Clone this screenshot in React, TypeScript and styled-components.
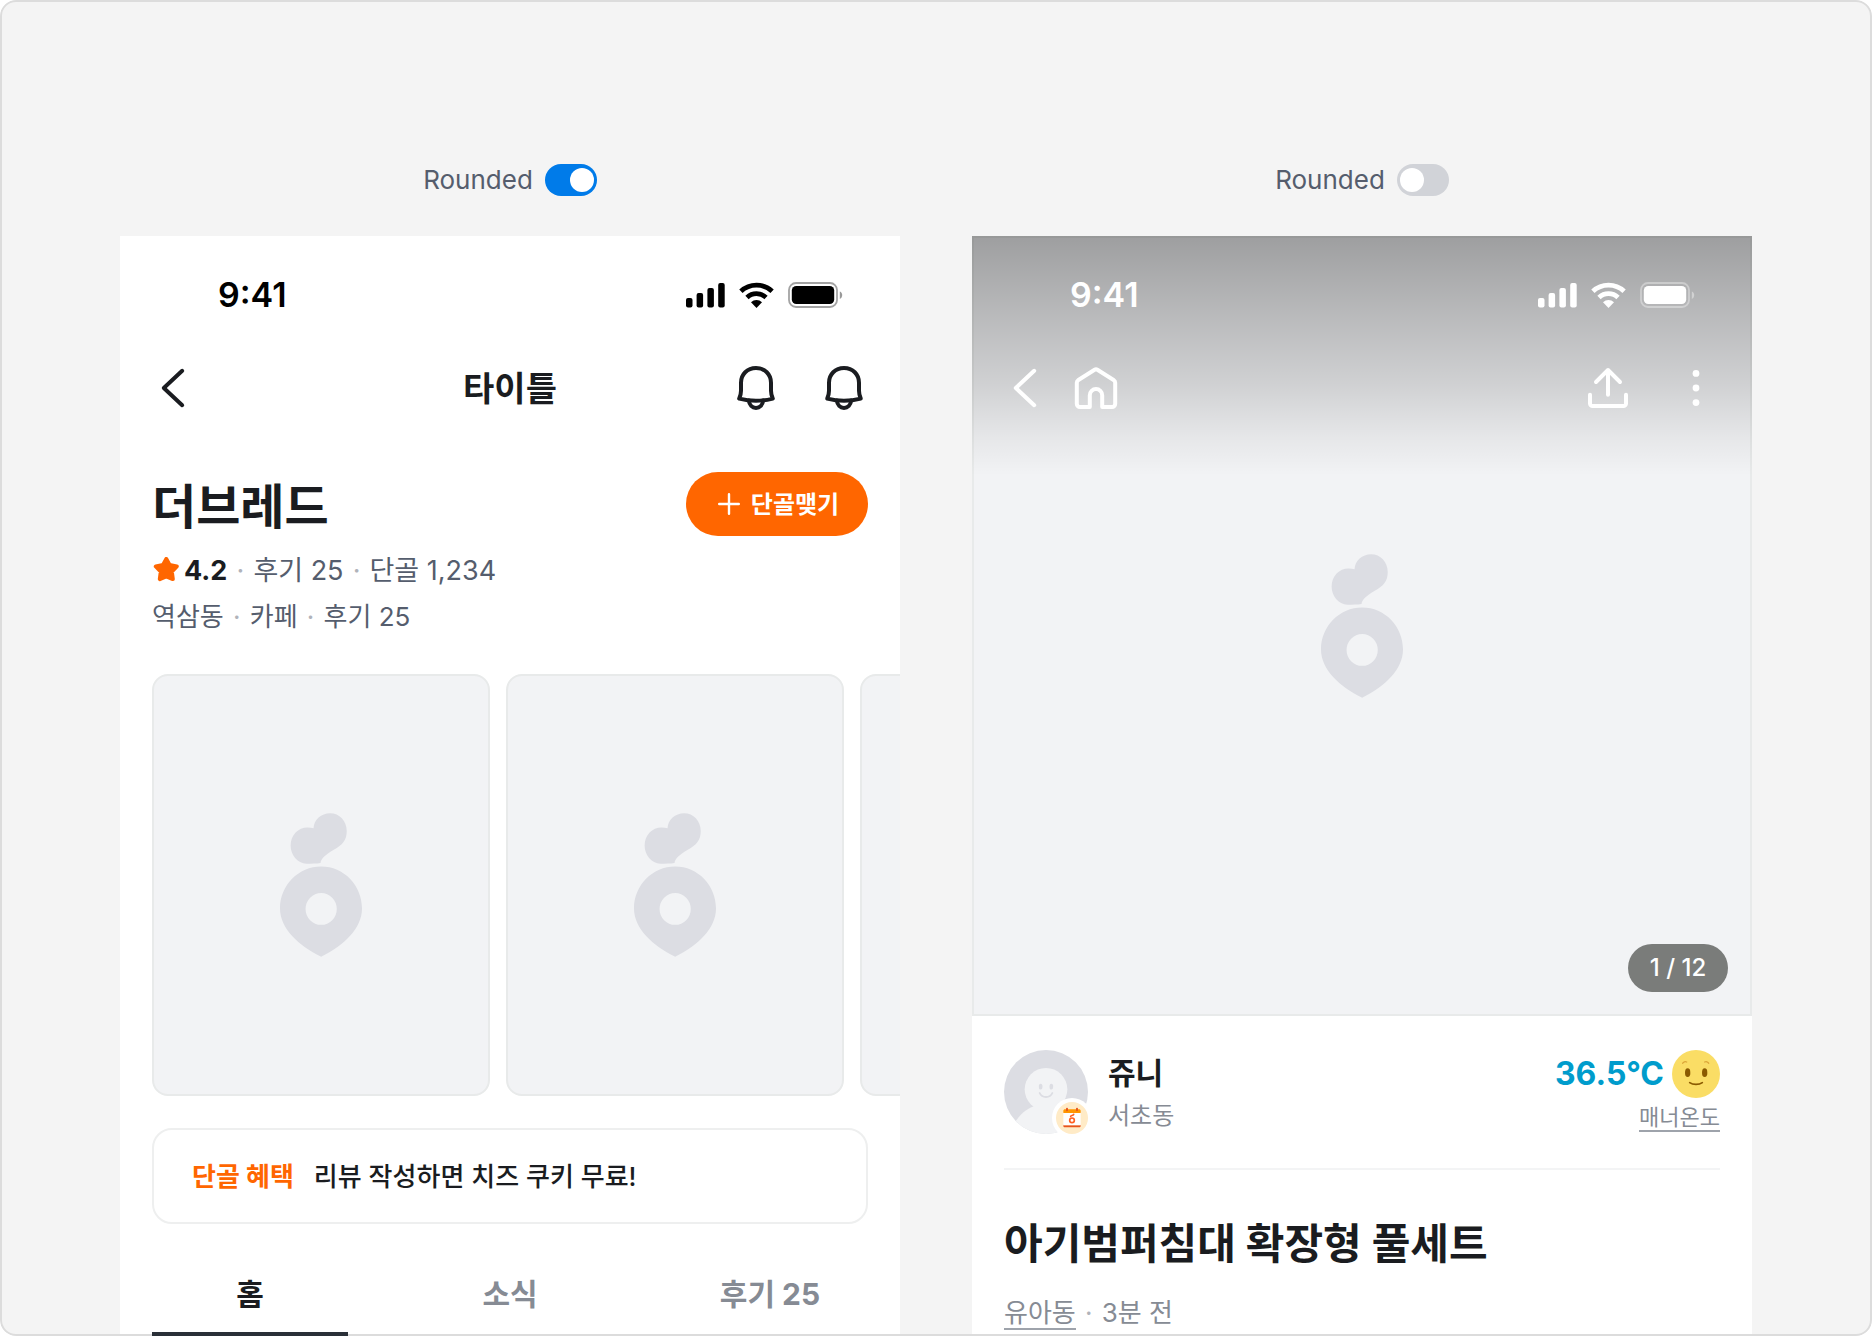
import React, { useState } from "react";
import styled, { createGlobalStyle } from "styled-components";

const sans = `Inter, "Noto Sans CJK KR", sans-serif`;

const GlobalStyle = createGlobalStyle`
  *, *::before, *::after { box-sizing: border-box; }
  body { margin: 0; background: #ffffff; font-family: ${sans}; color: #1a1c20; }
  button { font: inherit; color: inherit; background: none; border: 0; padding: 0; cursor: pointer; }
  h1, h2, p { margin: 0; }
  svg { display: block; flex: none; }
`;

const Frame = styled.main`
  position: relative;
  display: flex;
  gap: 72px;
  height: 100vh;
  padding: 164px 120px 0;
  overflow: hidden;
  border-radius: 16px;
  background: #f4f4f4;

  &::after {
    content: "";
    position: absolute;
    inset: 0;
    z-index: 1;
    border: 2px solid #dcdcdc;
    border-radius: 16px;
    pointer-events: none;
  }
`;

const Column = styled.section`
  flex: 1;
  min-width: 0;
  display: flex;
  flex-direction: column;
  gap: 40px;
`;

const SwitchLabel = styled.label`
  display: flex;
  align-items: center;
  justify-content: center;
  gap: 12px;
  height: 32px;
  font-size: 26px;
  line-height: 32px;
  color: #555d6d;
`;

const Switch = styled.input`
  appearance: none;
  display: flex;
  align-items: center;
  width: 52px;
  height: 32px;
  margin: 0;
  padding: 0 3px;
  border-radius: 16px;
  background: #d1d3d8;
  cursor: pointer;

  &::before {
    content: "";
    width: 24px;
    height: 24px;
    border-radius: 50%;
    background: #ffffff;
  }

  &:checked {
    justify-content: flex-end;
    background: #007be9;
  }
`;

const Phone = styled.div`
  flex: 1 0 auto;
  background: #ffffff;
`;

const StatusBar = styled.div<{ $light?: boolean }>`
  display: flex;
  align-items: center;
  justify-content: space-between;
  height: 108px;
  padding: 10px 57px 0 98px;
  color: ${(p) => (p.$light ? "#ffffff" : "#000000")};
`;

const Time = styled.span`
  font-size: 34px;
  line-height: 40px;
  font-weight: 600;
`;

const StatusIcons = styled.div`
  display: flex;
  align-items: center;
  gap: 14px;
`;

const NavBar = styled.nav<{ $light?: boolean }>`
  display: grid;
  grid-template-columns: 1fr auto 1fr;
  align-items: center;
  height: 88px;
  padding: 0 32px;
  color: ${(p) => (p.$light ? "#ffffff" : "#1a1c20")};
`;

const NavGroup = styled.div<{ $end?: boolean }>`
  display: flex;
  gap: ${(p) => (p.$end ? 40 : 20)}px;
  justify-content: ${(p) => (p.$end ? "flex-end" : "flex-start")};
`;

const IconButton = styled.button`
  width: 48px;
  height: 48px;
`;

const NavTitle = styled.h2`
  padding-top: 2px;
  font-size: 34px;
  line-height: 48px;
  font-weight: 700;
`;

const Shop = styled.div`
  padding: 40px 32px 34px;
`;

const ShopHeader = styled.div`
  display: flex;
  align-items: center;
  justify-content: space-between;
  margin-bottom: 12px;
`;

const ShopName = styled.h1`
  padding-top: 6px;
  font-size: 48px;
  line-height: 58px;
  font-weight: 700;
`;

const FollowButton = styled.button`
  display: flex;
  align-items: center;
  justify-content: center;
  gap: 8px;
  min-width: 182px;
  height: 64px;
  border-radius: 32px;
  background: #ff6600;
  color: #ffffff;
  font-size: 24px;
  line-height: 32px;
  font-weight: 700;
`;

const FollowText = styled.span`
  padding-top: 2px;
`;

const InfoLine = styled.p<{ $small?: boolean }>`
  display: flex;
  align-items: center;
  font-size: ${(p) => (p.$small ? 26 : 27)}px;
  line-height: 46px;
  color: #555d6d;
`;

const Score = styled.strong`
  margin-left: 4px;
  font-weight: 700;
  color: #1a1c20;
`;

const Dot = styled.span`
  width: 26px;
  text-align: center;
  color: #b0b3ba;
`;

const Carousel = styled.div`
  display: flex;
  gap: 16px;
  padding-left: 32px;
  overflow: hidden;
`;

const PhotoCard = styled.div`
  flex: none;
  display: flex;
  align-items: center;
  justify-content: center;
  width: 338px;
  height: 422px;
  border: 2px solid #e8eaea;
  border-radius: 16px;
  background: #f2f3f5;
`;

const Benefit = styled.div`
  display: flex;
  align-items: center;
  gap: 20px;
  height: 96px;
  margin: 32px 32px 28px;
  padding: 2px 38px 0;
  border: 2px solid #eeefef;
  border-radius: 20px;
  font-size: 26px;
  line-height: 36px;
  font-weight: 500;
`;

const BenefitTag = styled.strong`
  font-weight: 700;
  color: #ff6600;
`;

const Tabs = styled.div`
  display: flex;
`;

const Tab = styled.button<{ $active: boolean }>`
  position: relative;
  flex: 1;
  height: 84px;
  font-size: 30px;
  line-height: 40px;
  font-weight: 700;
  color: ${(p) => (p.$active ? "#1a1c20" : "#868b94")};

  &::after {
    content: "";
    position: absolute;
    inset: auto 32px 0;
    z-index: 2;
    height: 4px;
    background: ${(p) => (p.$active ? "#2a3038" : "transparent")};
  }
`;

const Hero = styled.div`
  position: relative;
  display: flex;
  align-items: center;
  justify-content: center;
  aspect-ratio: 1;
  border: 2px solid #e8eaea;
  background: #f2f3f5;
`;

const HeroOverlay = styled.div`
  position: absolute;
  inset: -2px -2px auto;
  height: 240px;
  background: linear-gradient(rgba(0, 0, 0, 0.35), rgba(0, 0, 0, 0.24) 32%, rgba(0, 0, 0, 0.14) 62%, rgba(0, 0, 0, 0.05) 84%, rgba(0, 0, 0, 0));
`;

const PageBadge = styled.span`
  position: absolute;
  right: 22px;
  bottom: 22px;
  min-width: 100px;
  height: 48px;
  border-radius: 24px;
  background: #7a7c7a;
  color: #ffffff;
  font-size: 24px;
  line-height: 48px;
  font-weight: 500;
  text-align: center;
`;

const Details = styled.div`
  padding: 0 32px;
`;

const Seller = styled.div`
  display: flex;
  align-items: flex-start;
  justify-content: space-between;
  padding: 34px 0;
  border-bottom: 2px solid #f3f4f5;
`;

const SellerProfile = styled.div`
  display: flex;
  gap: 20px;
`;

const SellerText = styled.div`
  padding-top: 2px;
`;

const SellerName = styled.p`
  font-size: 30px;
  line-height: 42px;
  font-weight: 700;
`;

const SellerArea = styled.p`
  padding-top: 4px;
  font-size: 24px;
  line-height: 36px;
  color: #868b94;
`;

const Manner = styled.div`
  display: flex;
  flex-direction: column;
  align-items: flex-end;
  gap: 6px;
`;

const Temperature = styled.div`
  display: flex;
  align-items: center;
  gap: 8px;
  height: 48px;
  font-size: 32px;
  line-height: 48px;
  font-weight: 700;
  color: #009ccc;
`;

const TextLink = styled.a<{ $small?: boolean }>`
  border-bottom: 2px solid #9ea3ab;
  font-size: ${(p) => (p.$small ? 22 : 26)}px;
  line-height: ${(p) => (p.$small ? 26 : 30)}px;
  color: #868b94;
  text-decoration: none;
`;

const PostTitle = styled.h1`
  margin-top: 46px;
  font-size: 42px;
  line-height: 56px;
  font-weight: 700;
`;

const PostMeta = styled.p`
  display: flex;
  margin-top: 26px;
  font-size: 26px;
  line-height: 30px;
  color: #868b94;
`;

const Carrot = () => (
  <svg width="82" height="144" viewBox="60 68 247 432" fill="#dcdde3" aria-hidden="true">
    <path d="M161 113C162 88 184 68 211 68c28 0 50 23 50 53 0 29-13 41-39 57-25 15-38 26-40 40-12 2-27 2-42 2-28-2-48-26-48-55 0-31 23-54 51-54 7 0 13 1 18 2Z" />
    <path fillRule="evenodd" d="M184 228c68 0 123 56 123 127 0 60-54 111-123 145C115 466 60 415 60 355c0-71 56-127 124-127Zm0 80a47 48 0 1 0 0 96 47 48 0 0 0 0-96Z" />
  </svg>
);

const icon = { width: 48, height: 48, viewBox: "0 0 24 24", fill: "none", "aria-hidden": true } as const;
const line = { stroke: "currentColor", strokeWidth: 2, strokeLinecap: "round", strokeLinejoin: "round" } as const;

const BackIcon = () => (
  <svg {...icon}>
    <path {...line} d="M15.1 3.4 5.9 12l9.2 8.6" />
  </svg>
);

const BellIcon = () => (
  <svg {...icon}>
    <path {...line} d="M12 2c-4.4 0-7.5 3.2-7.5 7.4v4c0 1.3-.3 2.6-.9 3.9 2.7.7 5.5 1.1 8.4 1.1s5.7-.4 8.400-1.100c-.6-1.300-.9-2.600-.9-3.900v-4C19.500 5.200 16.400 2 12 2Z" />
    <path {...line} d="M8.400 18.300C8.700 20.500 10.100 22 12 22s3.300-1.500 3.600-3.700" />
  </svg>
);

const HomeIcon = () => (
  <svg {...icon}>
    <path {...line} d="M11.300 2.900 3.200 8a1.700 1.700 0 0 0-.8 1.400v10.500c0 .9.700 1.600 1.600 1.600h4.900v-5.900a3.100 3.100 0 0 1 6.200 0v5.900H20c.9 0 1.600-.7 1.600-1.600V9.400c0-.6-.3-1.100-.8-1.400l-8.100-5.100a1.300 1.300 0 0 0-1.400 0Z" />
  </svg>
);

const ShareIcon = () => (
  <svg {...icon}>
    <path {...line} d="M12 15.400V3M6 9l6-6 6 6M3 15.400v4.300c0 .7.6 1.300 1.300 1.300h15.400c.7 0 1.300-.6 1.300-1.300v-4.300" />
  </svg>
);

const MoreIcon = () => (
  <svg {...icon} fill="currentColor">
    <circle cx="12" cy="4.7" r="1.7" />
    <circle cx="12" cy="12" r="1.7" />
    <circle cx="12" cy="19.3" r="1.7" />
  </svg>
);

const PlusIcon = () => (
  <svg width="28" height="28" viewBox="0 0 28 28" fill="none" stroke="currentColor" strokeWidth="2.4" strokeLinecap="round" aria-hidden="true">
    <path d="M14 4.200v19.600M4.200 14h19.600" />
  </svg>
);

const StarIcon = () => (
  <svg width="28" height="28" viewBox="0 0 28 28" fill="#ff6600" stroke="#ff6600" strokeWidth="4" strokeLinejoin="round" aria-hidden="true">
    <path d="m14.300 2 3.300 5.900 7.200 1.500-5 5.200 1 7.500-6.500-2.600-6.500 2.600 1-7.500-5-5.200L11 7.900Z" />
  </svg>
);

const StatusGlyphs = () => (
  <StatusIcons aria-hidden="true">
    <svg width="39" height="26" viewBox="0 0 39 26" fill="currentColor">
      <rect x="0" y="16" width="6.5" height="9.5" rx="2" />
      <rect x="10.6" y="11" width="6.5" height="14.5" rx="2" />
      <rect x="21.4" y="6" width="6.5" height="19.5" rx="2" />
      <rect x="32.2" y="1" width="6.5" height="24.5" rx="2" />
    </svg>
    <svg width="35" height="26" viewBox="0 0 35 26" fill="none" stroke="currentColor" strokeWidth="4.8">
      <path d="M1.900 9.300a22.800 22.800 0 0 1 31.200 0" />
      <path d="M8 15.400a13.800 13.800 0 0 1 19 0" />
      <path d="M17.500 26 12 20.300a8 8 0 0 1 11 0Z" fill="currentColor" stroke="none" />
    </svg>
    <svg width="55" height="26" viewBox="0 0 55 26" fill="none">
      <rect x="1" y="1" width="48" height="24" rx="7" stroke="currentColor" strokeWidth="1.8" opacity=".36" />
      <rect x="3.8" y="4" width="42.4" height="18" rx="4.5" fill="currentColor" />
      <path d="M51.800 9.500c3.200 1.200 3.200 6.200 0 7.400Z" fill="currentColor" opacity=".4" />
    </svg>
  </StatusIcons>
);

const Avatar = () => (
  <svg width="84" height="84" viewBox="72 90 252 252" aria-hidden="true">
    <clipPath id="avatar-clip">
      <circle cx="198" cy="216" r="126" />
    </clipPath>
    <g clipPath="url(#avatar-clip)">
      <path fill="#dcdde3" d="M72 90h252v252H72z" />
      <path fill="#f2f3f5" d="M100 316c18-34 44-54 72-60h52c34 6 56 26 74 60v30H100Z" />
      <circle cx="198" cy="208" r="64" fill="#f2f3f5" />
    </g>
    <ellipse cx="182" cy="200" rx="5.5" ry="8.5" fill="#dcdde3" />
    <ellipse cx="214" cy="200" rx="5.5" ry="8.5" fill="#dcdde3" />
    <path d="M179 219c7 16 31 16 38 0" fill="none" stroke="#dcdde3" strokeWidth="5.5" strokeLinecap="round" />
    <circle cx="276" cy="294" r="60" fill="#ffffff" />
    <circle cx="276" cy="294" r="48" fill="#ffebc7" />
    <path fill="#ffffff" d="M250 276h52v40h-52z" />
    <path fill="#e8551c" d="M250 314h52v3c0 3-2 5-5 5h-42c-3 0-5-2-5-5Z" />
    <path fill="#ffffff" d="M250 312h52v4h-52z" />
    <path fill="#ff9500" d="M255 268h42c3 0 5 2 5 5v6h-52v-6c0-3 2-5 5-5Z" />
    <path d="M261 266v5M291 266v5" stroke="#e8551c" strokeWidth="6" strokeLinecap="round" />
    <circle cx="276" cy="301" r="7" fill="none" stroke="#ff6022" strokeWidth="5" />
    <path d="M272 289c1-4 7-1 9-6" fill="none" stroke="#ff6022" strokeWidth="5" strokeLinecap="round" />
  </svg>
);

const MannerFace = () => (
  <svg width="48" height="48" viewBox="0 0 144 144" fill="none" aria-hidden="true">
    <circle cx="72" cy="72" r="72" fill="#fadd65" />
    <ellipse cx="47" cy="68" rx="8" ry="13" fill="#8a5a00" />
    <ellipse cx="98" cy="68" rx="8" ry="13" fill="#8a5a00" />
    <path d="M53 98c10 7 28 7 38 0" stroke="#8a5a00" strokeWidth="5" strokeLinecap="round" />
    <path d="M32 40c2-5 8-6 12-4M110 40c-2-5-8-6-12-4" stroke="#dba638" strokeWidth="4" strokeLinecap="round" />
  </svg>
);

const RoundedSwitch = ({ id, on }: { id: string; on: boolean }) => (
  <SwitchLabel htmlFor={id}>
    Rounded
    <Switch id={id} type="checkbox" role="switch" defaultChecked={on} />
  </SwitchLabel>
);

const tabNames = ["홈", "소식", "후기 25"];

export default function App() {
  const [tab, setTab] = useState(0);
  return (
    <>
      <GlobalStyle />
      <Frame>
        <Column>
          <RoundedSwitch id="rounded-on" on />
          <Phone>
            <StatusBar>
              <Time>9:41</Time>
              <StatusGlyphs />
            </StatusBar>
            <NavBar>
              <NavGroup>
                <IconButton aria-label="뒤로"><BackIcon /></IconButton>
              </NavGroup>
              <NavTitle>타이틀</NavTitle>
              <NavGroup $end>
                <IconButton aria-label="알림"><BellIcon /></IconButton>
                <IconButton aria-label="알림"><BellIcon /></IconButton>
              </NavGroup>
            </NavBar>
            <Shop>
              <ShopHeader>
                <ShopName>더브레드</ShopName>
                <FollowButton>
                  <PlusIcon />
                  <FollowText>단골맺기</FollowText>
                </FollowButton>
              </ShopHeader>
              <InfoLine>
                <StarIcon />
                <Score>4.2</Score>
                <Dot>·</Dot>후기 25<Dot>·</Dot>단골 1,234
              </InfoLine>
              <InfoLine $small>
                역삼동<Dot>·</Dot>카페<Dot>·</Dot>후기 25
              </InfoLine>
            </Shop>
            <Carousel>
              <PhotoCard><Carrot /></PhotoCard>
              <PhotoCard><Carrot /></PhotoCard>
              <PhotoCard><Carrot /></PhotoCard>
            </Carousel>
            <Benefit>
              <BenefitTag>단골 혜택</BenefitTag>
              <span>리뷰 작성하면 치즈 쿠키 무료!</span>
            </Benefit>
            <Tabs role="tablist">
              {tabNames.map((name, i) => (
                <Tab key={name} role="tab" aria-selected={tab === i} $active={tab === i} onClick={() => setTab(i)}>
                  {name}
                </Tab>
              ))}
            </Tabs>
          </Phone>
        </Column>
        <Column>
          <RoundedSwitch id="rounded-off" on={false} />
          <Phone>
            <Hero>
              <Carrot />
              <HeroOverlay>
                <StatusBar $light>
                  <Time>9:41</Time>
                  <StatusGlyphs />
                </StatusBar>
                <NavBar $light>
                  <NavGroup>
                    <IconButton aria-label="뒤로"><BackIcon /></IconButton>
                    <IconButton aria-label="홈"><HomeIcon /></IconButton>
                  </NavGroup>
                  <span />
                  <NavGroup $end>
                    <IconButton aria-label="공유"><ShareIcon /></IconButton>
                    <IconButton aria-label="더보기"><MoreIcon /></IconButton>
                  </NavGroup>
                </NavBar>
              </HeroOverlay>
              <PageBadge>1 / 12</PageBadge>
            </Hero>
            <Details>
              <Seller>
                <SellerProfile>
                  <Avatar />
                  <SellerText>
                    <SellerName>쥬니</SellerName>
                    <SellerArea>서초동</SellerArea>
                  </SellerText>
                </SellerProfile>
                <Manner>
                  <Temperature>36.5°C<MannerFace /></Temperature>
                  <TextLink href="#manner" $small>매너온도</TextLink>
                </Manner>
              </Seller>
              <PostTitle>아기범퍼침대 확장형 풀세트</PostTitle>
              <PostMeta>
                <TextLink href="#category">유아동</TextLink>
                <Dot>·</Dot>3분 전
              </PostMeta>
            </Details>
          </Phone>
        </Column>
      </Frame>
    </>
  );
}
